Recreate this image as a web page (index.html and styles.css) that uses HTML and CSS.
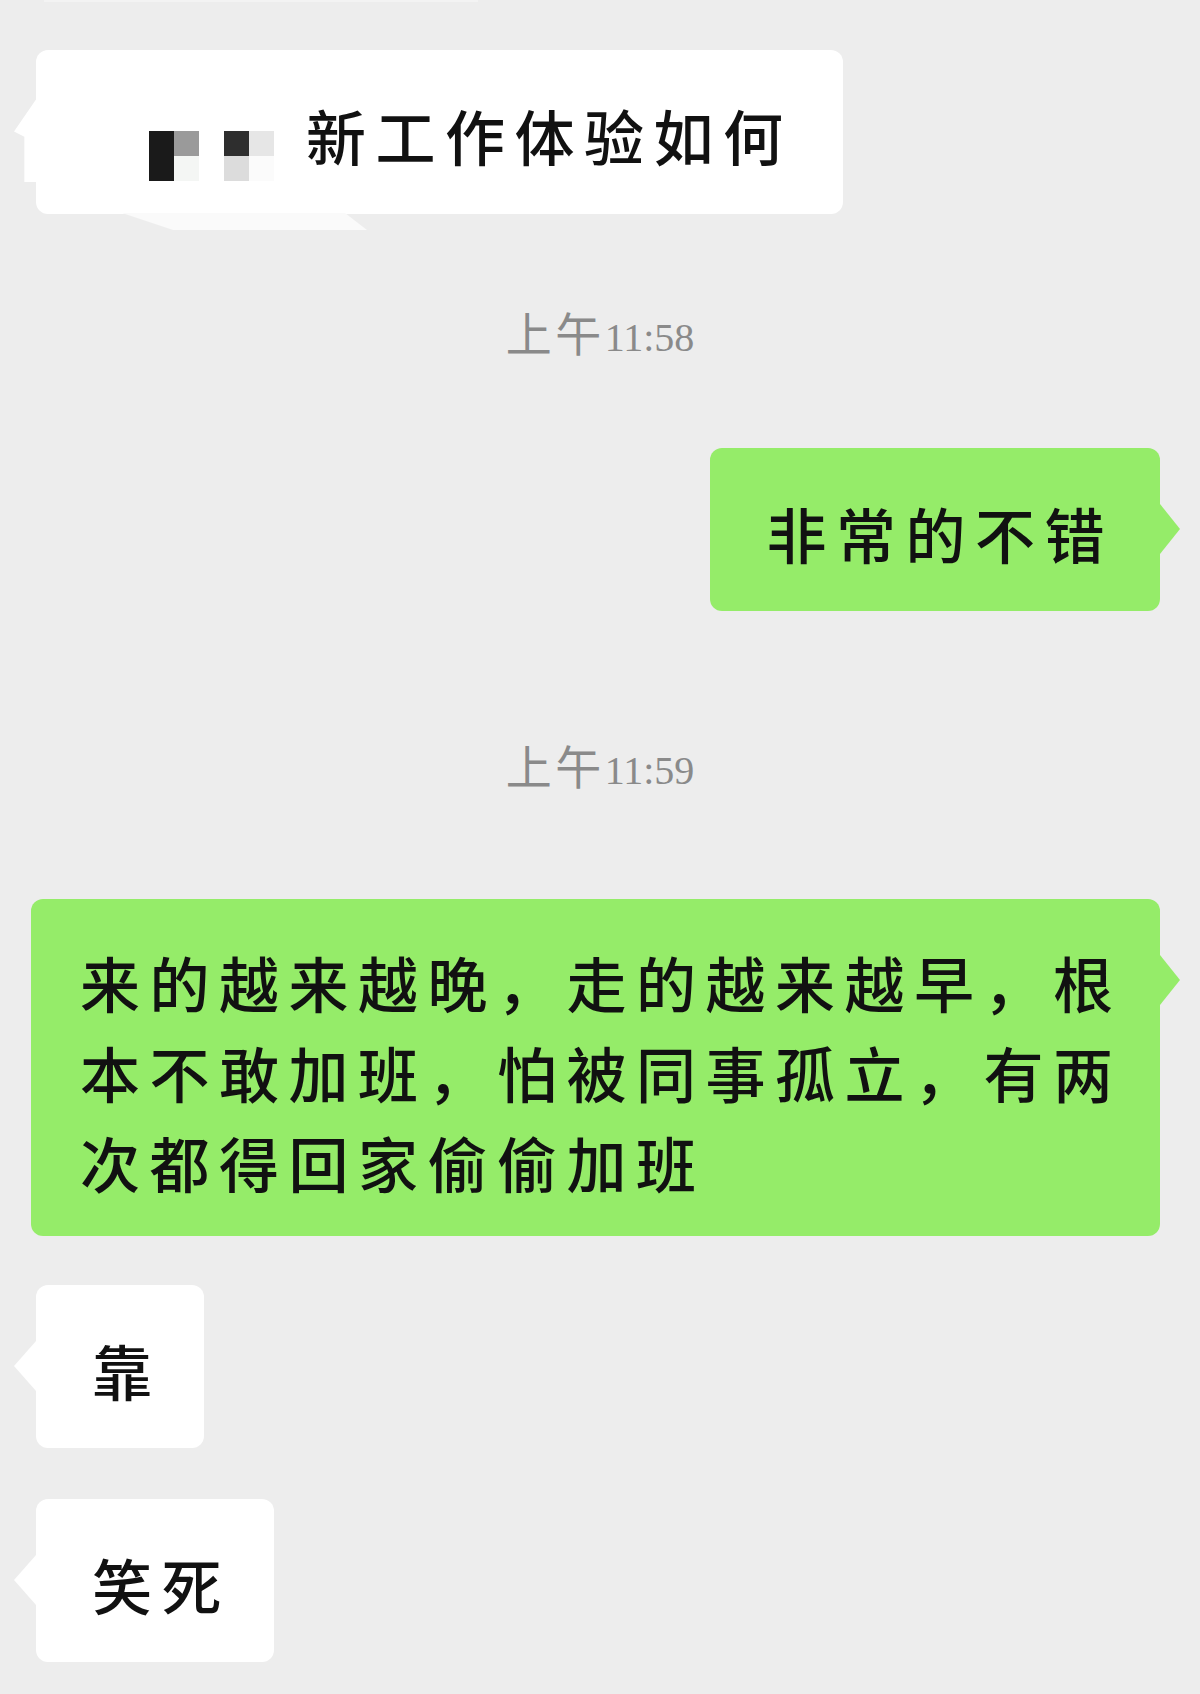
FILE: index.html
```html
<!DOCTYPE html>
<html lang="zh-CN">
<head>
    <meta charset="UTF-8">
    <meta name="viewport" content="width=device-width, initial-scale=1.0">
    <title>聊天记录</title>
    <link rel="stylesheet" href="styles.css">
</head>
<body>
    <div class="chat">
        <div class="edge-top"></div>

        <div class="row row-left row-first">
            <div class="bubble bubble-white bubble-quote">
                <div class="mosaic">
                    <span class="m1"></span><span class="m2"></span><span></span><span class="m3"></span><span class="m4"></span>
                    <span class="m1"></span><span class="m5"></span><span></span><span class="m6"></span><span class="m7"></span>
                </div>
                <span class="msg">新工作体验如何</span>
            </div>
        </div>

        <div class="time time-first"><span class="time-cn">上午</span>11:58</div>

        <div class="row row-right row-short">
            <div class="bubble bubble-green bubble-fine">非常的不错</div>
        </div>

        <div class="time time-second"><span class="time-cn">上午</span>11:59</div>

        <div class="row row-right row-long">
            <div class="bubble bubble-green bubble-long">来的越来越晚，走的越来越早，根本不敢加班，怕被同事孤立，有两次都得回家偷偷加班</div>
        </div>

        <div class="row row-left row-kao">
            <div class="bubble bubble-white bubble-kao">靠</div>
        </div>

        <div class="row row-left row-laugh">
            <div class="bubble bubble-white bubble-laugh">笑死</div>
        </div>
    </div>
</body>
</html>
```

FILE: styles.css
```css
html, body {
    margin: 0;
    background-color: #ededed;
}
body {
    font-family: "Noto Sans CJK SC", sans-serif;
    color: #111;
}
.edge-top {
    height: 2px;
    width: 434px;
    margin-left: 44px;
    background-color: #f3f3f3;
}
.row {
    display: flex;
}
.row-left {
    padding-left: 36px;
}
.row-right {
    justify-content: flex-end;
    padding-right: 40px;
}
.row-first {
    margin-top: 48px;
}
.row-short {
    margin-top: 92px;
}
.row-long {
    margin-top: 110px;
}
.row-kao {
    margin-top: 49px;
}
.row-laugh {
    margin-top: 51px;
}

/* bubbles */
.bubble {
    position: relative;
    box-sizing: border-box;
    max-width: 1129px;
    border-radius: 12px;
    font-size: 60px;
    font-weight: 500;
    line-height: 90px;
    letter-spacing: 9.5px;
    padding: 40px 44px 33px 56px;
}
.bubble-white {
    background-color: #fff;
}
.bubble-white::before {
    content: "";
    position: absolute;
    left: -22px;
    top: 56px;
    border-style: solid;
    border-width: 25px 22px 25px 0;
    border-color: transparent #fff transparent transparent;
}
.bubble-green {
    background-color: #95ec69;
}
.bubble-green::after {
    content: "";
    position: absolute;
    right: -20px;
    top: 56px;
    border-style: solid;
    border-width: 25px 0 25px 20px;
    border-color: transparent transparent transparent #95ec69;
}

.bubble-quote {
    display: flex;
    align-items: flex-start;
    padding: 40px 50px 33px 113px;
}
.bubble-quote::before {
    border: none;
    left: -22px;
    top: 48px;
    width: 23px;
    height: 84px;
    background-color: #fff;
    clip-path: polygon(100% 0, 0 40%, 45% 46%, 45% 100%, 100% 100%);
}
.bubble-quote::after {
    content: "";
    position: absolute;
    left: 86px;
    top: 163px;
    width: 245px;
    height: 17px;
    background-color: #fafafa;
    clip-path: polygon(0 0, 223px 0, 100% 100%, 51px 100%);
}
.bubble-quote .msg {
    white-space: nowrap;
}
.mosaic {
    display: grid;
    grid-template-columns: repeat(5, 25px);
    grid-template-rows: repeat(2, 25px);
    margin-top: 41px;
    margin-right: 32px;
}
.m1 { background-color: #1a1a1a; }
.m2 { background-color: #9a9a9a; }
.m3 { background-color: #2e2e2e; }
.m4 { background-color: #e6e6e6; }
.m5 { background-color: #f4f6f4; }
.m6 { background-color: #dcdcdc; }
.m7 { background-color: #fbfbfb; }

.bubble-fine {
    padding: 40px 46px 33px 57px;
}
.bubble-long {
    padding: 38px 30px 29px 49px;
}
.bubble-kao {
    padding: 40px 42px 33px 56px;
}
.bubble-laugh {
    padding: 40px 43px 33px 56px;
}

/* timestamps */
.time {
    height: 50px;
    text-align: center;
    font-family: "Liberation Serif", "Noto Sans CJK SC", serif;
    font-size: 40px;
    line-height: 50px;
    color: #8a8a8a;
}
.time-cn {
    font-family: "Noto Sans CJK SC", sans-serif;
    font-size: 46px;
    letter-spacing: 3.5px;
}
.time-first {
    margin-top: 92px;
}
.time-second {
    margin-top: 128px;
}
```
